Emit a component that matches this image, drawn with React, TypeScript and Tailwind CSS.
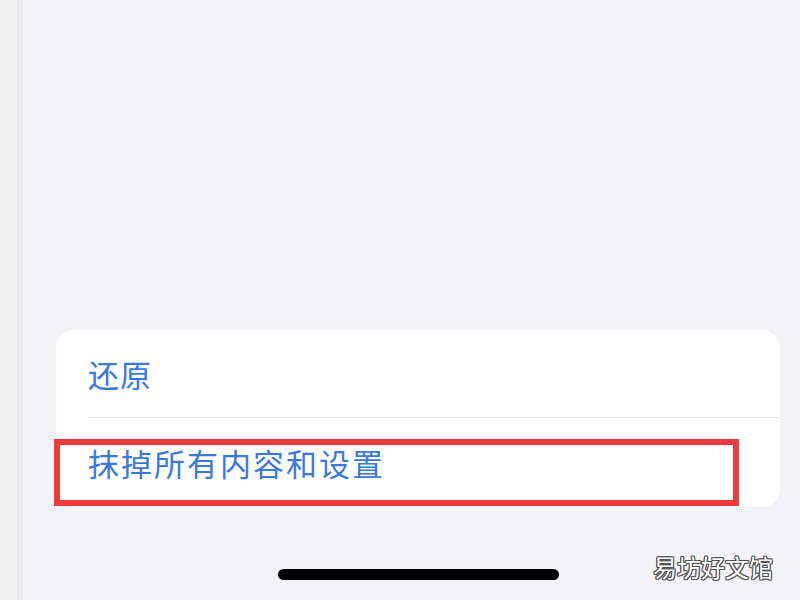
export default function App() {
  return (
    <div className="relative flex h-[600px] w-[800px] overflow-hidden bg-[#f2f2f7] font-['Noto_Sans_CJK_SC','Noto_Sans',sans-serif]">
      {/* left edge of the previous screen */}
      <div className="h-full w-[17px] bg-[#efeff0]" />
      <div className="h-full w-[6px] bg-[#ececed]" />

      <div className="flex flex-1 flex-col pl-[33px] pr-[20px] pt-[330px]">
        <div className="flex flex-col rounded-[18px] bg-white">
          <div className="flex h-[87px] items-center pl-[32px]">
            <span className="text-[31px] leading-none tracking-[1px] text-[#3a78e0]">还原</span>
          </div>
          <div className="ml-[32px] h-px bg-[#e3e3e6]" />
          <div className="flex h-[89px] items-center pl-[32px]">
            <span className="text-[31px] leading-none tracking-[2px] text-[#3a78e0]">抹掉所有内容和设置</span>
          </div>
        </div>

        <div className="mt-[62px] flex justify-center">
          <div className="h-[11px] w-[281px] rounded-full bg-black" />
        </div>
      </div>

      {/* annotation box */}
      <div className="pointer-events-none absolute left-[54px] top-[439px] h-[67px] w-[685px] border-[6px] border-[#ee3a3e]" />

      {/* watermark */}
      <div className="absolute left-[653px] top-[555px] text-[24px] leading-none text-white [text-shadow:1px_0_#505050,-1px_0_#505050,0_1px_#505050,0_-1px_#505050,1px_1px_#505050,-1px_-1px_#505050,1px_-1px_#505050,-1px_1px_#505050]">
        易坊好文馆
      </div>
    </div>
  );
}
